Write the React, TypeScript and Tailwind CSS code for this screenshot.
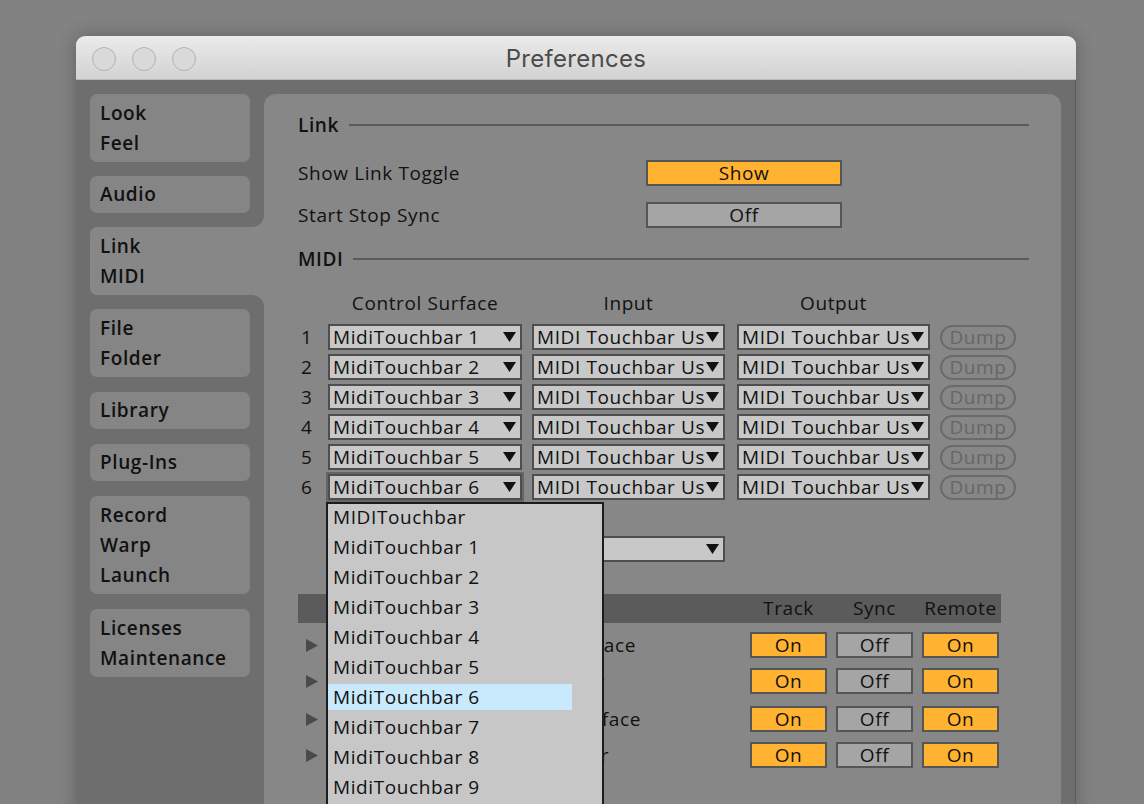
import React from "react";

const tabText = "flex h-[30px] items-center";

function Tab({ lines, selected }: { lines: string[]; selected?: boolean }) {
  return (
    <div
      className={
        selected
          ? "flex w-[174px] flex-col justify-center rounded-l-[7px] bg-[#878787] pl-[10px]"
          : "flex w-[160px] flex-col justify-center rounded-[7px] bg-[#858585] pl-[10px]"
      }
      style={{ height: lines.length * 30 + 8 }}
    >
      {lines.map((l) => (
        <div key={l} className={tabText}>
          {l}
        </div>
      ))}
    </div>
  );
}

function Arrow() {
  return (
    <svg width="13" height="10" viewBox="0 0 13 10" className="shrink-0">
      <polygon points="0,0 13,0 6.5,10" fill="#111" />
    </svg>
  );
}

function Select({ label, focused, w = "w-[194px]" }: { label: string; focused?: boolean; w?: string }) {
  return (
    <div
      className={
        "flex h-[26px] items-center border-2 border-[#4e4e4e] bg-[#c8c8c8] pl-[3px] pr-[4px] " +
        w +
        (focused ? " outline-2 outline-[#666]" : "")
      }
    >
      <span className="flex-1 overflow-hidden whitespace-nowrap leading-none">{label}</span>
      <Arrow />
    </div>
  );
}

function Toggle({ label, on, w = "w-[77px]" }: { label: string; on?: boolean; w?: string }) {
  return (
    <div
      className={
        "flex h-[26px] items-center justify-center border-2 border-[#555] leading-none " +
        w +
        (on ? " bg-[#ffb330]" : " bg-[#a5a5a5]")
      }
    >
      {label}
    </div>
  );
}

function Heading({ title }: { title: string }) {
  return (
    <div className="flex h-[30px] items-center gap-[10px]">
      <span className="font-semibold">{title}</span>
      <div className="h-[2px] flex-1 bg-[#5a5a5a]" />
    </div>
  );
}

function Triangle() {
  return (
    <svg width="12" height="13" viewBox="0 0 12 13" className="ml-[8px] shrink-0">
      <polygon points="0,0 12,6.5 0,13" fill="#4a4a4a" />
    </svg>
  );
}

// the popup hides most of these; only the tails show past its right edge
const ports = [
  { text: "Input:  MidiTouchbar Surface", mt: "mt-[9px]", w: "w-[306px]" },
  { text: "Output:  MIDI Touchbar", mt: "mt-[10px]", w: "w-[275px]" },
  { text: "Input:  MIDI Touchbar Interface", mt: "mt-[12px]", w: "w-[311px]" },
  { text: "Output:  MIDI Touchbar", mt: "mt-[10px]", w: "w-[279px]" },
];

export default function App() {
  return (
    <div className="h-[804px] w-[1144px] overflow-hidden bg-[#828282] pl-[76px] pt-[36px] font-['Open_Sans',sans-serif] text-[19px] tracking-[0.6px] text-[#111]">
      <div className="flex h-[800px] w-[1000px] flex-col overflow-hidden rounded-t-[9px] shadow-[0_0_18px_rgba(0,0,0,0.25)]">
        {/* title bar */}
        <div className="relative flex h-[44px] shrink-0 items-center justify-center border-b border-[#b9b9b9] bg-gradient-to-b from-[#ebebeb] to-[#d2d2d2] pt-[2px]">
          <div className="absolute left-[16px] top-[11px] flex gap-[16px]">
            <div className="h-[24px] w-[24px] rounded-full border border-[#b3b3b3] bg-[#dadada]" />
            <div className="h-[24px] w-[24px] rounded-full border border-[#b3b3b3] bg-[#dadada]" />
            <div className="h-[24px] w-[24px] rounded-full border border-[#b3b3b3] bg-[#dadada]" />
          </div>
          <span className="font-['Inter',sans-serif] text-[24px] tracking-[0.3px] text-[#4b4b4b]">Preferences</span>
        </div>

        {/* body */}
        <div className="flex flex-1 border-r border-[#5c5c5c] bg-[#6e6e6e]">
          {/* sidebar */}
          <div className="flex w-[188px] shrink-0 flex-col font-semibold">
            <div className="bg-[#878787]">
              <div className="flex flex-col gap-[14px] rounded-br-[12px] bg-[#6e6e6e] pb-[14px] pl-[14px] pt-[14px]">
                <Tab lines={["Look", "Feel"]} />
                <div className="flex h-[37px] w-[160px] items-center rounded-[7px] bg-[#858585] pl-[10px]">Audio</div>
              </div>
            </div>
            <div className="bg-[#6e6e6e] pl-[14px]">
              <Tab lines={["Link", "MIDI"]} selected />
            </div>
            <div className="flex-1 bg-[#878787]">
              <div className="flex h-full flex-col gap-[15px] rounded-tr-[12px] bg-[#6e6e6e] pl-[14px] pt-[14px]">
                <Tab lines={["File", "Folder"]} />
                <div className="flex h-[37px] w-[160px] items-center rounded-[7px] bg-[#858585] pl-[10px]">Library</div>
                <div className="flex h-[37px] w-[160px] items-center rounded-[7px] bg-[#858585] pl-[10px]">Plug-Ins</div>
                <Tab lines={["Record", "Warp", "Launch"]} />
                <Tab lines={["Licenses", "Maintenance"]} />
              </div>
            </div>
          </div>

          {/* main panel */}
          <div className="relative mr-[14px] mt-[14px] flex flex-1 flex-col rounded-t-[12px] bg-[#878787] pl-[34px] pr-[32px] pt-[16px]">
            <Heading title="Link" />
            <div className="mt-[20px] flex h-[26px] items-center">
              <span className="w-[348px]">Show Link Toggle</span>
              <Toggle label="Show" on w="w-[196px]" />
            </div>
            <div className="mt-[16px] flex h-[26px] items-center">
              <span className="w-[348px]">Start Stop Sync</span>
              <Toggle label="Off" w="w-[196px]" />
            </div>
            <div className="mt-[16px]">
              <Heading title="MIDI" />
            </div>

            <div className="mt-[17px] flex h-[24px] items-center pl-[30px]">
              <span className="w-[204px] pr-[10px] text-center">Control Surface</span>
              <span className="w-[205px] pr-[12px] text-center">Input</span>
              <span className="w-[193px] text-center">Output</span>
            </div>

            <div className="mt-[9px] flex flex-col gap-[4px]">
              {[1, 2, 3, 4, 5, 6].map((n) => (
                <div key={n} className="flex h-[26px] items-center">
                  <span className="w-[30px] pl-[3px]">{n}</span>
                  <Select label={"MidiTouchbar " + n} focused={n === 6} />
                  <div className="ml-[10px]">
                    <Select label="MIDI Touchbar Us" w="w-[193px]" />
                  </div>
                  <div className="ml-[12px]">
                    <Select label="MIDI Touchbar Us" w="w-[193px]" />
                  </div>
                  <div className="ml-[10px] flex h-[25px] w-[76px] items-center justify-center rounded-full border-2 border-[#6a6a6a] leading-none text-[#666]">
                    Dump
                  </div>
                </div>
              ))}
            </div>

            <div className="mt-[36px] flex h-[26px] items-center pl-[234px]">
              <Select label="None" w="w-[193px]" />
            </div>

            <div className="mt-[32px] flex h-[29px] w-[703px] items-center bg-[#5b5b5b] pr-[2px]">
              <span className="flex-1 pl-[32px]">MIDI Ports</span>
              <div className="flex gap-[9px]">
                <span className="w-[77px] text-center">Track</span>
                <span className="w-[77px] text-center">Sync</span>
                <span className="w-[77px] text-center">Remote</span>
              </div>
            </div>

            {ports.map((p, i) => (
              <div key={i} className={"flex h-[26px] w-[703px] items-center pr-[2px] " + p.mt}>
                <Triangle />
                <span className="w-[12px] shrink-0" />
                <span className={"shrink-0 overflow-hidden whitespace-nowrap text-right " + p.w}>{p.text}</span>
                <div className="flex-1" />
                <div className="flex gap-[9px]">
                  <Toggle label="On" on />
                  <Toggle label="Off" />
                  <Toggle label="On" on />
                </div>
              </div>
            ))}

            {/* open popup menu */}
            <div className="absolute left-[62px] top-[408px] flex h-[330px] w-[278px] flex-col gap-[4px] border-2 border-[#1c1c1c] bg-[#c7c7c7]">
              {["MIDITouchbar", "MidiTouchbar 1", "MidiTouchbar 2", "MidiTouchbar 3", "MidiTouchbar 4", "MidiTouchbar 5", "MidiTouchbar 6", "MidiTouchbar 7", "MidiTouchbar 8", "MidiTouchbar 9"].map(
                (item) => (
                  <div
                    key={item}
                    className={
                      "flex h-[26px] w-[244px] shrink-0 items-center pl-[5px] " +
                      (item === "MidiTouchbar 6" ? "bg-[#c8eafc]" : "")
                    }
                  >
                    {item}
                  </div>
                )
              )}
            </div>
          </div>
        </div>
      </div>
    </div>
  );
}
